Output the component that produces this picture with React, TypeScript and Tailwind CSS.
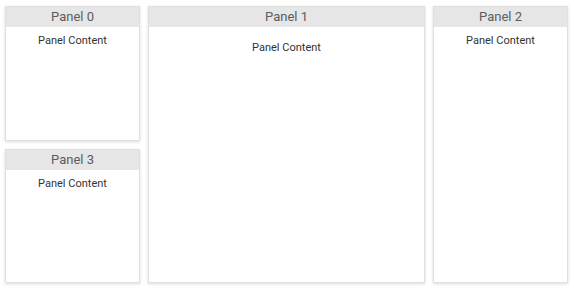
import React from 'react'

function Panel({ title, className = '', contentPad = 'pt-[6px]' }: { title: string; className?: string; contentPad?: string }) {
  return (
    <div className={`flex flex-col bg-white border border-[#e0e0e0] shadow-[0_1px_3px_rgba(0,0,0,0.15)] ${className}`}>
      <div className="h-[20px] bg-[#e6e6e6] flex items-center justify-center text-[13px] text-[#5c5c5c]">
        {title}
      </div>
      <div className={`flex-1 text-center text-[11px] text-[#333] ${contentPad}`}>Panel Content</div>
    </div>
  )
}

export default function App() {
  return (
    <div
      className="w-[574px] h-[293px] bg-white pl-[5px] pr-[6px] pt-[6px] pb-[10px] flex gap-[8px]"
      style={{ fontFamily: 'Roboto, "Liberation Sans", sans-serif' }}
    >
      <div className="w-[135px] flex flex-col gap-[8px]">
        <Panel title="Panel 0" className="flex-1" />
        <Panel title="Panel 3" className="flex-1" />
      </div>
      <Panel title="Panel 1" className="flex-1" contentPad="pt-[13px]" />
      <Panel title="Panel 2" className="w-[135px]" />
    </div>
  )
}
